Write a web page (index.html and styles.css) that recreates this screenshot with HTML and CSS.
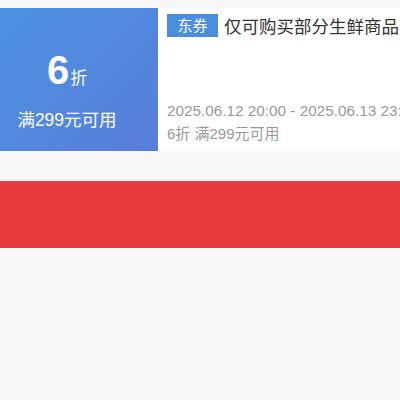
FILE: index.html
```html
<!DOCTYPE html>
<html lang="zh">
<head>
<meta charset="utf-8">
<link rel="stylesheet" href="styles.css">
</head>
<body>
<div class="coupon">
  <div class="left">
    <div class="amount"><span class="num">6</span><span class="unit">折</span></div>
    <div class="limit">满299元可用</div>
  </div>
  <div class="right">
    <div class="title-row">
      <span class="tag">东券</span>
      <span class="title">仅可购买部分生鲜商品</span>
    </div>
    <div class="date">2025.06.12 20:00 - 2025.06.13 23:59</div>
    <div class="cond">6折 满299元可用</div>
  </div>
</div>
<div class="red-bar"></div>
</body>
</html>
```
FILE: styles.css
```css
html, body {
  margin: 0;
  padding: 0;
}
body {
  background: #f7f7f7;
  font-family: "Liberation Sans", "Noto Sans CJK SC", sans-serif;
  padding-top: 8px;
  width: 400px;
  overflow: hidden;
}
.coupon {
  display: flex;
  height: 143px;
  background: #fff;
}
.left {
  width: 158px;
  flex: none;
  box-sizing: border-box;
  padding: 42px 24px 0 0;
  background: linear-gradient(135deg, #4a92e2 0%, #5a7dd9 100%);
  color: #fff;
  display: flex;
  flex-direction: column;
  align-items: center;
}
.amount {
  display: flex;
  align-items: baseline;
  line-height: 1;
  height: 40px;
}
.num {
  font-size: 40px;
  font-weight: bold;
}
.unit {
  font-size: 17px;
  margin-left: 1px;
}
.limit {
  font-size: 17.5px;
  margin-top: 22px;
  line-height: 1;
}
.right {
  flex: 1;
  min-width: 0;
  overflow: hidden;
  padding: 5px 0 0 9px;
  white-space: nowrap;
}
.title-row {
  display: flex;
  align-items: center;
  gap: 6px;
}
.tag {
  background: #4a8edb;
  color: #fff;
  font-size: 15px;
  height: 23px;
  line-height: 23px;
  padding: 0 10px;
  width: 31px;
  text-align: center;
  flex: none;
}
.title {
  font-size: 17.5px;
  color: #333;
}
.date {
  font-size: 15.3px;
  color: #999;
  margin-top: 64px;
  line-height: 18px;
}
.cond {
  font-size: 15px;
  color: #999;
  margin-top: 5px;
  line-height: 18px;
}
.red-bar {
  margin-top: 30px;
  height: 67px;
  background: #e83a3f;
}
```
